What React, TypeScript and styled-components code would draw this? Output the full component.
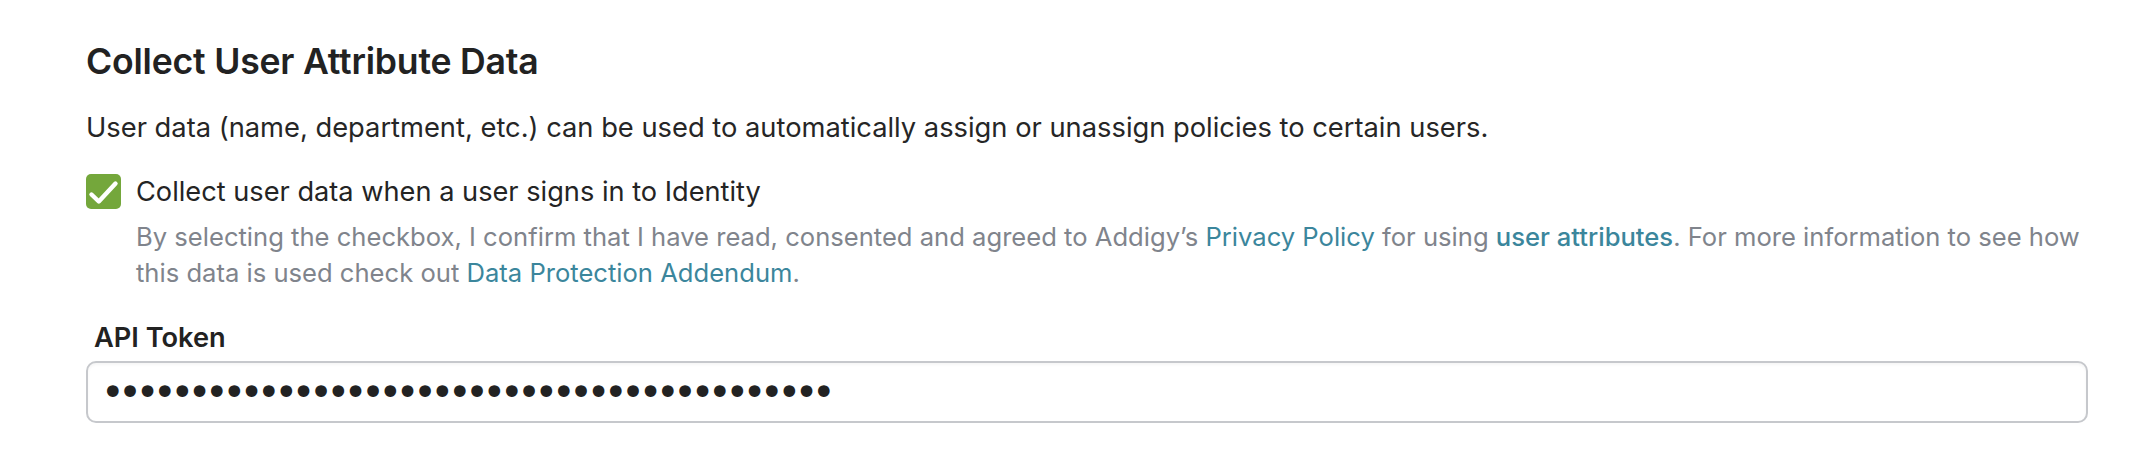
import styled, { createGlobalStyle } from "styled-components";

const GlobalStyle = createGlobalStyle`
    html, body {
        margin: 0;
        padding: 0;
        background: #ffffff;
    }
    body {
        font-family: "Inter", "Noto Sans", sans-serif;
        color: #262626;
    }
`;

const SettingsSection = styled.section`
    padding: 42px 58px 0 86px;
    display: flex;
    flex-direction: column;
`;

const SectionTitle = styled.h2`
    margin: 0;
    font-size: 35.6px;
    line-height: 40px;
    font-weight: 600;
    color: #222222;
    letter-spacing: -0.2px;
`;

const SectionText = styled.p`
    margin: 28px 0 0;
    font-size: 27.3px;
    line-height: 36px;
    color: #262626;
`;

const CheckRow = styled.label`
    margin-top: 28px;
    display: flex;
    align-items: flex-start;
    gap: 15px;
    cursor: pointer;
`;

const CheckBox = styled.span<{ $checked: boolean }>`
    flex: none;
    width: 35px;
    height: 35px;
    border-radius: 5px;
    background: ${(p) => (p.$checked ? "#74a73b" : "#ffffff")};
    border: ${(p) => (p.$checked ? "none" : "2px solid #c6c8cc")};
    display: flex;
    align-items: center;
    justify-content: center;
`;

const CheckLabel = styled.span`
    font-size: 27.2px;
    line-height: 35px;
    color: #242424;
`;

const ConsentText = styled.p`
    margin: 10px 0 0 50px;
    font-size: 25.6px;
    line-height: 36px;
    color: #80848c;
`;

const ConsentLink = styled.a<{ $strong?: boolean }>`
    color: #3b869c;
    text-decoration: none;
    font-weight: ${(p) => (p.$strong ? 500 : 400)};
`;

const FieldLabel = styled.label`
    margin: 31px 0 0 8px;
    font-size: 27.2px;
    line-height: 32px;
    font-weight: 600;
    color: #222222;
`;

const TokenInput = styled.input`
    margin-top: 7px;
    box-sizing: border-box;
    width: 100%;
    height: 62px;
    padding: 0 13px;
    border: 2px solid #c6c8cc;
    border-radius: 10px;
    background: #ffffff;
    box-shadow: inset 0 2px 3px rgba(0, 0, 0, 0.04);
    font-family: "DejaVu Sans", sans-serif;
    font-size: 40px;
    letter-spacing: -6.25px;
    color: #222222;
    outline: none;
`;

function CheckMark() {
    return (
        <svg width="35" height="35" viewBox="0 0 35 35">
            <path
                d="M5.5 20.5 L12.8 27.5 L29.5 9.5"
                fill="none"
                stroke="#ffffff"
                strokeWidth="4.4"
                strokeLinecap="round"
                strokeLinejoin="round"
            />
        </svg>
    );
}

export default function App() {
    const checked = true;

    return (
        <>
            <GlobalStyle />
            <SettingsSection>
                <SectionTitle>Collect User Attribute Data</SectionTitle>
                <SectionText>
                    User data (name, department, etc.) can be used to automatically assign or unassign
                    policies to certain users.
                </SectionText>

                <CheckRow>
                    <CheckBox $checked={checked}>{checked ? <CheckMark /> : null}</CheckBox>
                    <CheckLabel>Collect user data when a user signs in to Identity</CheckLabel>
                </CheckRow>
                <ConsentText>
                    By selecting the checkbox, I confirm that I have read, consented and agreed to
                    Addigy’s <ConsentLink href="#">Privacy Policy</ConsentLink> for using{" "}
                    <ConsentLink href="#" $strong>user attributes</ConsentLink>. For more information to
                    see how this data is used check out{" "}
                    <ConsentLink href="#">Data Protection Addendum</ConsentLink>.
                </ConsentText>

                <FieldLabel htmlFor="api-token">API Token</FieldLabel>
                <TokenInput id="api-token" type="password" readOnly value={"x".repeat(42)} />
            </SettingsSection>
        </>
    );
}
